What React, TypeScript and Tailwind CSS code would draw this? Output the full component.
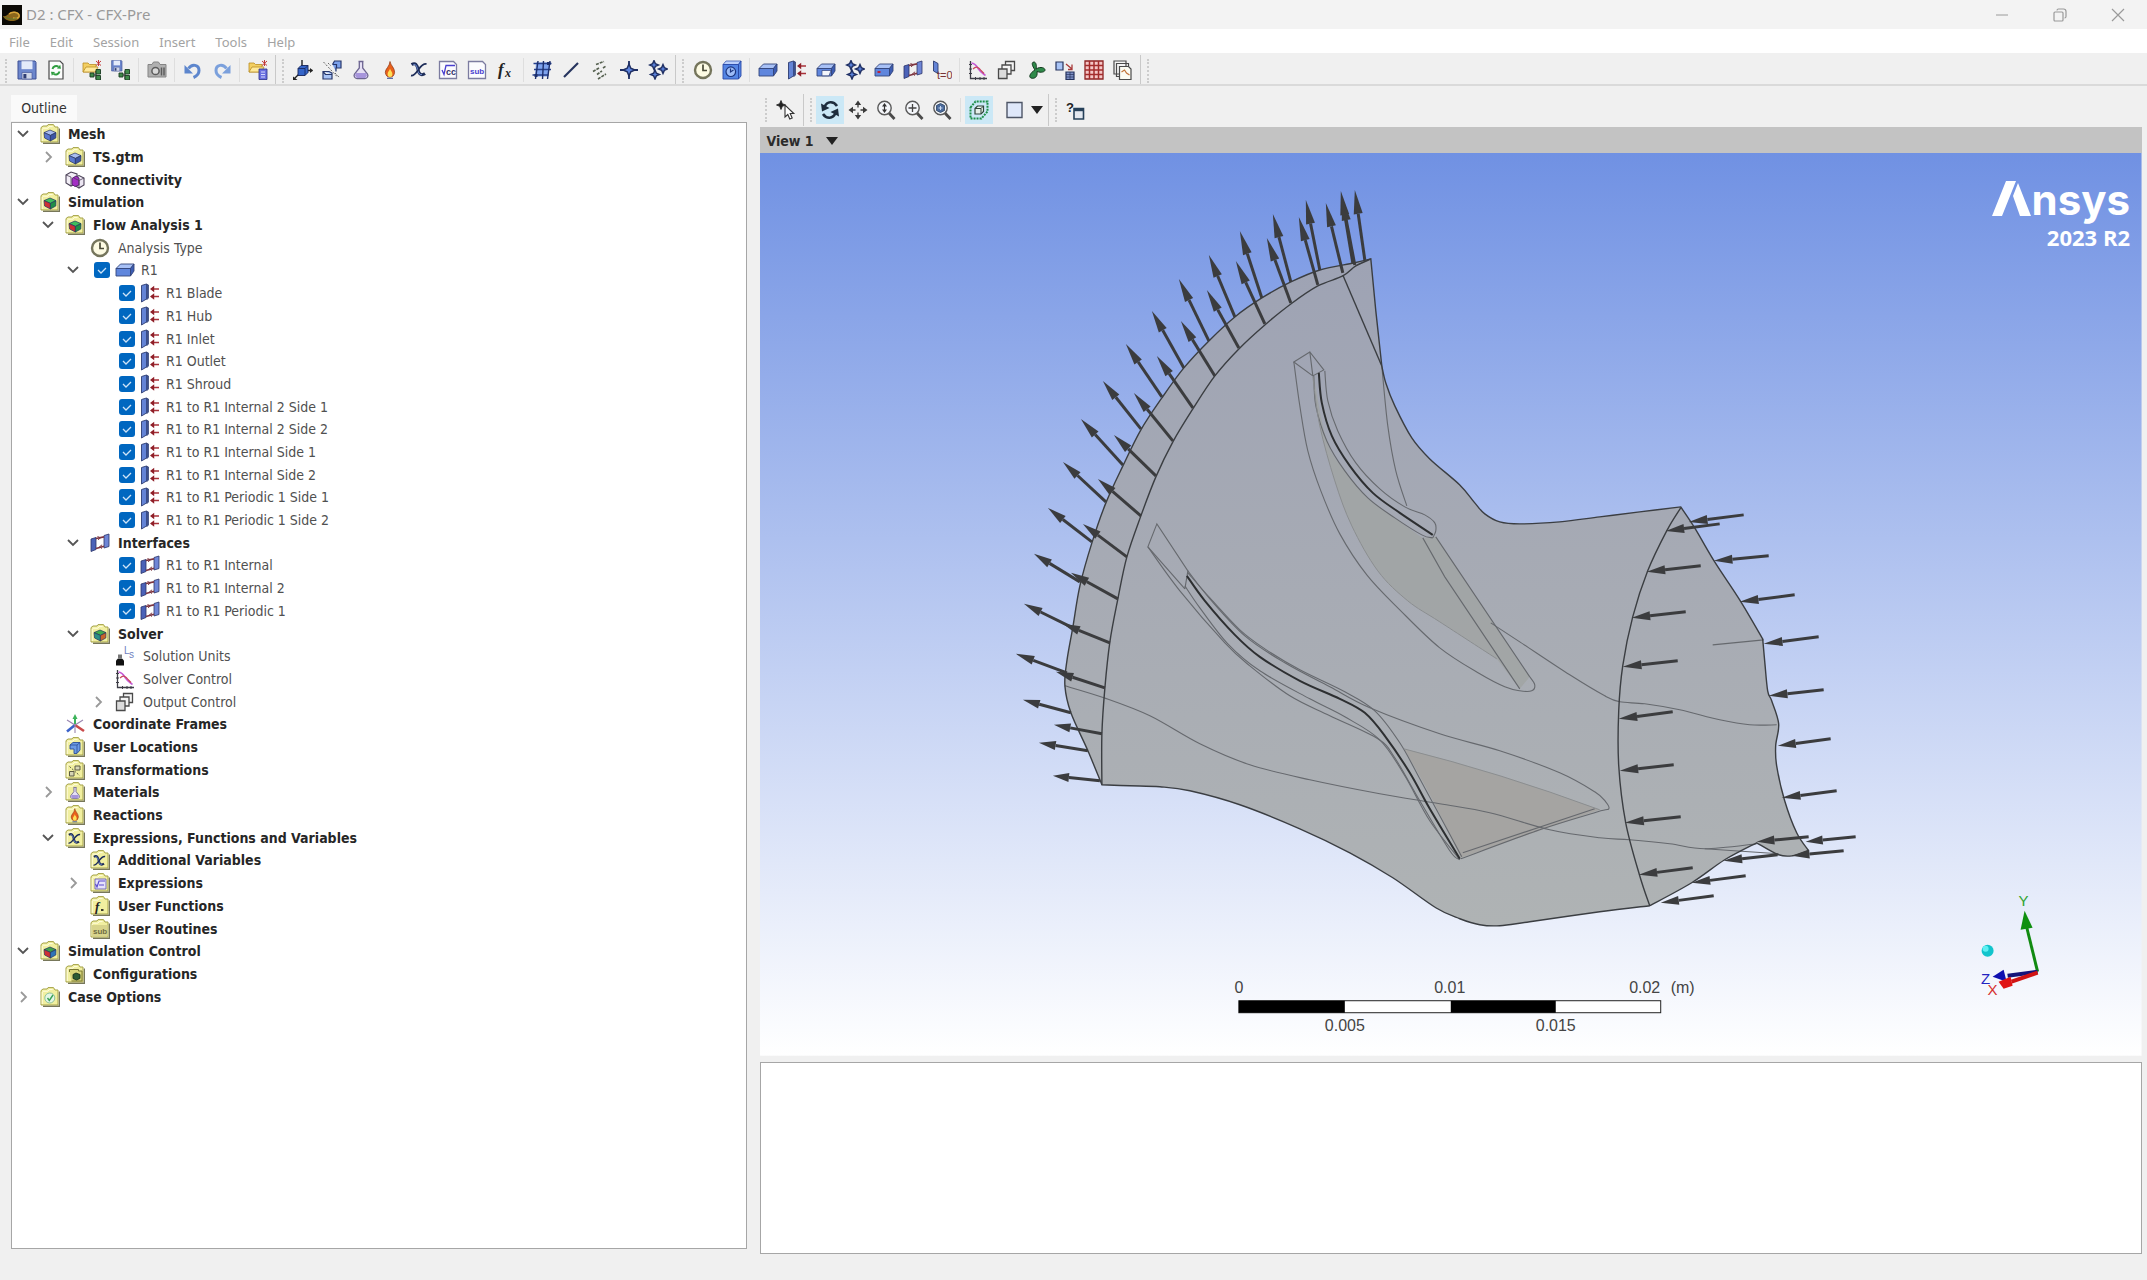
import { Fragment, type ReactNode } from "react"
import { clsx } from "clsx"

const MENUS = ["File", "Edit", "Session", "Insert", "Tools", "Help"]

/* ---------- icon parts, all on a 20x20 grid ---------- */

const Folder = ({ children }: { children?: ReactNode }) => (
  <>
    <path d="M3 19.2h16.4V4.5" fill="none" stroke="#77775a" strokeWidth="1.4" />
    <path d="M1 3.6 3 2h4l1-1.4h5.5L15 3h3v15H1z" fill="#f1efa0" stroke="#a5a248" strokeWidth="1" />
    <path d="M2.2 5v12M2.5 4.2h5.5l1-1.6h3.6" fill="none" stroke="#fffde0" strokeWidth="1" />
    {children}
  </>
)

const Cube = ({ top = "#a9bdf0", left = "#5a78cf", right = "#3d55a5" }) => (
  <>
    <path d="M4 8.6 10 6l6 2.6-5.6 2.8z" fill={top} stroke="#26335f" strokeWidth=".7" />
    <path d="m4 8.6 6.4 2.8V17L4.6 14z" fill={left} stroke="#26335f" strokeWidth=".7" />
    <path d="m16 8.6-5.6 2.8V17l5.4-3z" fill={right} stroke="#26335f" strokeWidth=".7" />
  </>
)

const Floppy = () => (
  <>
    <path d="M1 1h17l1 1.4V19H1z" fill="#6c86cc" stroke="#3c4f94" />
    <path d="M4.5 1.2h11v8h-11z" fill="#e4ebfa" />
    <path d="M5 12.5h10V19H5z" fill="#cfd6e8" stroke="#3c4f94" strokeWidth=".6" />
    <path d="M6.4 14h3v4.4h-3z" fill="#2f3d74" />
  </>
)

const Flame = () => (
  <>
    <path d="M10 1.5c.6 4 4.6 6 4.6 10.8a4.7 5.7 0 0 1-9.3 0C5.4 8.7 9.6 6.5 10 1.5z" fill="#e8601c" stroke="#8a3210" strokeWidth=".7" />
    <path d="M10 8.5c.5 2.2 2.4 3.2 2.4 5.5a2.4 3 0 0 1-4.8 0c0-2.2 2-3 2.4-5.5z" fill="#ffdf55" />
    <path d="M7 18.3h6" stroke="#4b5f9a" strokeWidth="1.2" />
  </>
)

const Flask = () => (
  <>
    <path d="M7.5 1.5h5M8.3 2v6L3.5 14a3 3 0 0 0 2.5 4.5h8a3 3 0 0 0 2.5-4.5L11.7 8V2" fill="#e6e0f4" stroke="#6d6591" strokeWidth="1.3" />
    <path d="M5 13h10l1 2.5-2 2.5H6l-2-2.5z" fill="#a795dc" />
  </>
)

const Box = ({ open = false, dot = false }) => (
  <>
    <path d="M1 8.5 5.5 4H19l-3.5 4.5z" fill="#a8c1f6" stroke="#33457c" strokeWidth=".9" />
    <path d="M1 8.5h14.5V16H1z" fill="#5f86dd" stroke="#33457c" strokeWidth=".9" />
    <path d="M15.5 8.5 19 4v7l-3.5 5z" fill="#3c5cb2" stroke="#33457c" strokeWidth=".9" />
    {open && <path d="M6 10.5h9l-2 5.3H6z" fill="#f4f6fb" stroke="#33457c" strokeWidth=".7" />}
    {dot && <path d="M3.5 12h3" stroke="#b8253c" strokeWidth="2" />}
  </>
)

const Boundary = () => (
  <>
    <path d="M1.5 2.5 6.5 1v15l-5 3z" fill="#6484d6" stroke="#2d3c70" strokeWidth=".9" />
    <path d="M6.5 1 8.5 2v13l-2 2" fill="#3b508f" stroke="#2d3c70" strokeWidth=".7" />
    <path d="M12.5 6H19M12.5 13.5H19" stroke="#a8323a" strokeWidth="1.3" />
    <path d="m10 6 4.2-3.2v6.4zM10 13.5l4.2-3.2v6.4z" fill="#8f1f28" />
  </>
)

const Interface = () => (
  <>
    <path d="M1 6 6 4.5v12L1 18.5z" fill="#4b62b8" stroke="#2b3468" strokeWidth=".8" />
    <path d="m14 2.5 5-1.5v12.5L14 15z" fill="#6f86d6" stroke="#2b3468" strokeWidth=".8" />
    <path d="M6 5.5 14 3.8M6 15.5l8-2.3" stroke="#7d3540" strokeWidth="1.7" />
    <path d="m7.5 3.5 3 1.3-2.5 2M12 15.5l-2.5-1.7 2.6-2" fill="none" stroke="#7d3540" strokeWidth="1" />
  </>
)

const Clock = () => (
  <>
    <circle cx="10" cy="10" r="8" fill="#fdfbe3" stroke="#75755c" strokeWidth="2.4" />
    <path d="M10 4.5V10.500h4" fill="none" stroke="#4a4a38" strokeWidth="1.7" />
  </>
)

const VarX = () => (
  <>
    <path d="M2.500 4.500c4-2.200 5.500 0 6.500 5s3.500 6.500 7 4" fill="none" stroke="#1d2c58" strokeWidth="3" />
    <path d="M4.500 4.500c2.500-.5 3.200 1.500 4.200 5.500s2.300 4.800 4.300 4.500" fill="none" stroke="#7f9fe6" strokeWidth="1" />
    <path d="M17.500 4c-3.500-.5-5.500 2-8 5.500S5 16 2 15.500" fill="none" stroke="#1d2c58" strokeWidth="1.800" />
  </>
)

const Sheets = () => (
  <>
    <path d="M8.500 1.500h9v9h-9z" fill="#f4f4f4" stroke="#4a4a4a" strokeWidth="1.3" />
    <path d="M5 5h9v9H5z" fill="#f4f4f4" stroke="#4a4a4a" strokeWidth="1.3" />
    <path d="M1.500 9h8.500v9.500H1.500z" fill="#dcdcdc" stroke="#4a4a4a" strokeWidth="1.3" />
  </>
)

const Plot = () => (
  <>
    <path d="M2.500 1v17.500H19" fill="none" stroke="#3d3d46" strokeWidth="1.3" />
    <path d="M1 4.500h3M1 9h3M1 13.500h3M7.500 17v3M12 17v3M16 17v3" stroke="#3d3d46" strokeWidth="1" />
    <path d="M3.500 3c4 .5 5 3 7 6s4 4 7 6.500" fill="none" stroke="#c55ad6" strokeWidth="1.6" />
    <path d="M5 9c3-3 6-2 8 1.500l3 3" fill="none" stroke="#c9485e" strokeWidth="1.2" />
  </>
)

const sparkle = (x: number, y: number, r: number) =>
  `M${x} ${y - r}l${r * 0.3} ${r * 0.7} ${r * 0.7} ${r * 0.3}-${r * 0.7} ${r * 0.3}-${r * 0.3} ${r * 0.7}-${r * 0.3}-${r * 0.7}-${r * 0.7}-${r * 0.3} ${r * 0.7}-${r * 0.3}z`

const Sparkles = () => (
  <path
    d={sparkle(6, 5, 4.5) + sparkle(15, 9, 4.5) + sparkle(7, 14.5, 4.5)}
    fill="#5b83dd"
    stroke="#1f2f63"
    strokeWidth="1.4"
  />
)

const NewFolder = () => (
  <>
    <path d="M1 3h5l1.500 1.500H14V12H1z" fill="#f3cf62" stroke="#b98d25" strokeWidth=".8" />
    <path d="M1 12 4 7h12l-2.500 5z" fill="#ffe99a" stroke="#b98d25" strokeWidth=".8" />
    <path d="m14 1 5 4.500m0-4.500-5 4.500M16.500 0v6" stroke="#c23a3a" strokeWidth="1" />
  </>
)

const Tee = () => (
  <>
    <path d="M9 15h5M14 11v8" stroke="#222" strokeWidth="1" />
    <path d="M8 13h4v4H8zM14 9.500h4.500V14H14zM14 15.500h4.500V20H14z" fill="#3f8a4a" stroke="#1a3a20" strokeWidth=".9" />
  </>
)

const Magnifier = ({ children }: { children?: ReactNode }) => (
  <>
    <path d="m12.500 12.500 6 6.500" stroke="#4a4a4a" strokeWidth="2.8" />
    <circle cx="8.500" cy="8" r="6.700" fill="#f4f6fa" stroke="#5a5a5a" strokeWidth="1.4" />
    {children}
  </>
)

const Page = ({ children }: { children?: ReactNode }) => (
  <>
    <path d="M1.500 1.500h14l3 3v14h-17z" fill="#fbfbfe" stroke="#7c7ca0" strokeWidth="1.3" />
    {children}
  </>
)

const ICONS = {
  save: <Floppy />,
  reload: (
    <>
      <path d="M3 1h11l3 3v15H3z" fill="#fdfdfd" stroke="#4a4a4a" strokeWidth="1.2" />
      <path d="M6.500 9a3.800 3.800 0 0 1 6-2.200M13.500 11.500a3.800 3.800 0 0 1-6 2.200" fill="none" stroke="#2f9d3f" strokeWidth="1.9" />
      <path d="m11 8.500 4 .2-.8-4zM9 12l-4-.2.800 4z" fill="#2f9d3f" />
    </>
  ),
  openTee: <><NewFolder /><Tee /></>,
  saveTee: <><g transform="scale(.58)"><Floppy /></g><Tee /></>,
  camera: (
    <>
      <path d="M1 4.500h4L6.500 2h5L13 4.500h6V17H1z" fill="#b0b0b0" stroke="#858585" />
      <circle cx="8.500" cy="11" r="3.600" fill="#d9d9d9" stroke="#5c5c5c" strokeWidth="1.5" />
      <path d="M14.500 7.500v8M17 7.500v8" stroke="#5c5c5c" strokeWidth="1.5" />
    </>
  ),
  undo: (
    <>
      <path d="M5.500 8.500C9 3.500 16 4.500 16 10.500c0 3-2 5.500-5.500 7" fill="none" stroke="#5d86cd" strokeWidth="3" />
      <path d="M1.500 5v8.500H10z" fill="#5d86cd" />
    </>
  ),
  redo: (
    <>
      <path d="M14.500 8.500C11 3.500 4 4.500 4 10.500c0 3 2 5.500 5.500 7" fill="none" stroke="#7ba0dc" strokeWidth="3" />
      <path d="M18.500 5v8.500H10z" fill="#7ba0dc" />
    </>
  ),
  openDoc: (
    <>
      <NewFolder />
      <path d="M11 9h8v10.500h-8z" fill="#6b70e0" stroke="#2a2f86" strokeWidth=".8" />
      <path d="M13 12h4M13 14.500h4M13 17h4" stroke="#dfe2ff" strokeWidth=".9" />
    </>
  ),
  domainCube: (
    <>
      <path d="M9 9V0M10 10.500h9.500M8 12l-7 7" stroke="#222" strokeWidth="1.4" />
      <path d="M5 8.500 8 5.500h7v7L12 15.500H5z" fill="#3565c9" stroke="#15255a" strokeWidth=".9" />
      <path d="M5 8.500h7l3-3M12 8.500v7" fill="none" stroke="#15255a" strokeWidth=".8" />
      <path d="M0 16.500 4.500 20H0zM17 8l3 2.500-3 2.500z" fill="#222" />
    </>
  ),
  transform: (
    <>
      <path d="M10.500 4.500 12.500 1H19v7h-5v3.500M10.500 4.500h4v4" fill="#7da2ec" stroke="#27376c" strokeWidth="1.2" />
      <path d="M1 11.500h6l3 1.500v6H1zM1 11.500l2.500 3H10" fill="#a9c4f6" stroke="#27376c" strokeWidth="1.2" />
      <path d="m1.500 2 14 15M6 3l3 3M13 13l5 5" stroke="#666" strokeWidth="1" strokeDasharray="2 1.500" />
    </>
  ),
  flask: <Flask />,
  flame: <Flame />,
  varX: <VarX />,
  expr: (
    <Page>
      <path d="m4 10 2 4.500L8 5.500h9" fill="none" stroke="#4a3fd0" strokeWidth="1.3" />
      <text x="8" y="15" fontSize="9" fontFamily="Liberation Sans" fontWeight="700" fill="#33336a">cc</text>
    </Page>
  ),
  sub: (
    <Page>
      <text x="3" y="14" fontSize="8" fontFamily="Liberation Sans" fontWeight="700" fill="#4a3fd0">sub</text>
    </Page>
  ),
  fx: (
    <>
      <text x="2" y="15" fontSize="17" fontFamily="Liberation Serif" fontStyle="italic" fontWeight="700" fill="#222">f</text>
      <text x="9" y="17" fontSize="12" fontFamily="Liberation Serif" fontStyle="italic" fontWeight="700" fill="#222">x</text>
    </>
  ),
  meshGrid: (
    <>
      <path d="M4 2.500h14.500L16 16.500H3z" fill="#7ea3ee" />
      <path d="M1.500 3.500h18M2 9.500h17M.5 15h16" stroke="#27408c" strokeWidth="1.4" />
      <path d="M6 1 3.500 19M11.500 1l-1 18M18 1l-2.500 18" stroke="#1d2f6b" strokeWidth="1.4" />
      <path d="M2.500 14h3v3h-3zM15 2h3.500v3H15z" fill="#1d2f6b" />
    </>
  ),
  line: <path d="M3 17 17 3" stroke="#26345e" strokeWidth="2.2" />,
  lines: <path d="m6 4.500 8-3M3 11.500l6-3.500M8 19l8-5M7 14.500l5-3.500M13 8l3-2" stroke="#55604f" strokeWidth="1.6" strokeDasharray="3 1" />,
  point: (
    <>
      <path d="M10 1v18M1 10h18" stroke="#1f2f63" strokeWidth="1.8" />
      <path d={sparkle(10, 10, 6)} fill="#5b83dd" stroke="#1f2f63" strokeWidth="1.5" />
    </>
  ),
  points: <Sparkles />,
  clock: <Clock />,
  clockBox: (
    <>
      <path d="M1 4.500 4 1h15l-2.500 3.500z" fill="#bcd0fa" stroke="#2a4aa8" strokeWidth=".7" />
      <path d="M1 4.500h15.500V19H1zM16.500 4.500 19 1v15l-2.500 3z" fill="#5485e4" stroke="#2a4aa8" strokeWidth=".9" />
      <circle cx="8.800" cy="11.700" r="4.800" fill="#9dbcf7" stroke="#1c357f" strokeWidth="1.2" />
      <path d="M8.500 8.500v3.500l3-2" fill="none" stroke="#1c357f" strokeWidth="1.2" />
    </>
  ),
  box: <Box />,
  boundary: <Boundary />,
  boxOpen: <Box open />,
  boxDot: <Box dot />,
  interfaces: <Interface />,
  initial: (
    <>
      <path d="M1.500 1 6 3.500v10L1.500 11z" fill="#6484d6" stroke="#2d3c70" strokeWidth=".9" />
      <text x="5" y="19" fontSize="11" fontFamily="Liberation Sans" fill="#7a3434">t=0</text>
    </>
  ),
  plot: <Plot />,
  sheets: <Sheets />,
  fan: <path d="M9 10C5 4 6 2 8 2s3 4 2 7c5-3 9-1 9 1s-4 3-8 1.500c1 6-3 7.500-6 6.500s0-6 4-8" fill="#2f8a4a" stroke="#143a20" strokeWidth="1" />,
  copyMesh: (
    <>
      <path d="M1 2h7v8H1z" fill="#a9c4f6" stroke="#26345e" strokeWidth="1.2" />
      <path d="M11 12h8v7.500h-8z" fill="#7d8fc4" stroke="#26345e" strokeWidth="1.2" />
      <path d="M11 14.500h8M11 17h8M15 12v7.500" stroke="#26345e" strokeWidth=".7" />
      <path d="m11 4 6 5m0-4.500V9.500h-4" fill="none" stroke="#a83a3a" strokeWidth="1.3" />
    </>
  ),
  table: (
    <>
      <path d="M1 1h18v18H1z" fill="#f5c6c6" stroke="#8d2323" strokeWidth="1.3" />
      <path d="M1 5.500h18M1 10h18M1 14.500h18M5.500 1v18M10 1v18M14.500 1v18" stroke="#a32b2b" strokeWidth="1.5" />
    </>
  ),
  reports: (
    <>
      <path d="M1 1h12v13H1zM3.500 3.500h12v13h-12z" fill="#f4f4f4" stroke="#4a4a4a" strokeWidth="1.2" />
      <path d="M6.500 6.500h9l2.500 2.500v10.500H6.500z" fill="#fbfbf2" stroke="#4a4a4a" strokeWidth="1.2" />
      <path d="m8.500 12 3-2 2 3 3 2" fill="none" stroke="#c2743a" strokeWidth="1.2" />
    </>
  ),
  pick: (
    <>
      <path d={sparkle(5, 5, 4.5)} fill="#222" stroke="#222" strokeWidth=".8" />
      <path d="M9 5v12l2.800-2.500 2 4.500 2.400-1-2-4.500h3.600z" fill="#fff" stroke="#333" strokeWidth="1.1" />
    </>
  ),
  rotate: (
    <>
      <path d="M17 6C13.500.8 7 1 4.500 7M3 14c3.500 5.200 10 5 12.500-1" fill="none" stroke="#1e2d3d" strokeWidth="2.6" />
      <path d="M1 3.500 9.500 8 2 11.500zM19 16.500 10.500 12l7.500-3.500z" fill="#1e2d3d" />
    </>
  ),
  pan: (
    <>
      <path d="m10 .5 3.200 4.500H6.800zM10 19.500l3.200-4.500H6.800zM.5 10 5 6.800v6.400zM19.500 10 15 6.800v6.400z" fill="#3a3a3a" />
      <path d="M10 4v3.500M10 12.500V16M4 10h3.500M12.500 10H16" stroke="#3a3a3a" strokeWidth="1.3" />
    </>
  ),
  zoomFree: (
    <Magnifier>
      <path d="m8.500 3 2.500 3.500H6zM8.500 13 6 9.500h5z" fill="#333" />
      <path d="M8.500 5v6" stroke="#333" strokeWidth="1.2" />
    </Magnifier>
  ),
  zoomBox: (
    <Magnifier>
      <path d="M8.500 4v8M4.500 8h8" stroke="#444" strokeWidth="1.3" />
    </Magnifier>
  ),
  zoomFit: (
    <Magnifier>
      <path d="m8.500 3.500 4 2v5l-4 2-4-2v-5z" fill="#4a6a9c" stroke="#27405f" strokeWidth=".8" />
      <path d="M8.500 6v4M6.500 8h4" stroke="#c8d8f0" strokeWidth="1" />
    </Magnifier>
  ),
  highlight: (
    <>
      <path d="M1.500 7.500 6.500 1.500h12v10l-6 7h-11z" fill="none" stroke="#1f8f4a" strokeWidth="2" strokeDasharray="2 1" />
      <path d="M6 8.500 8.500 6h6v5.500L12 14H6z" fill="#e6efe9" stroke="#31453a" strokeWidth="1.2" />
      <path d="M6 8.500h6l2.500-2.500M12 8.500V14" fill="none" stroke="#31453a" strokeWidth="1" />
    </>
  ),
  square: <path d="M2 2.500h15v15H2z" fill="#dfe8fa" stroke="#4d5566" strokeWidth="1.4" />,
  helpBox: (
    <>
      <text x="1" y="12" fontSize="13" fontFamily="Liberation Sans" fontWeight="700" fill="#222">?</text>
      <path d="M9 8.500h9.500V19H9z" fill="#e3e8f0" stroke="#26415a" strokeWidth="1.6" />
      <path d="M9 10h9.500" stroke="#26415a" strokeWidth="2.4" />
    </>
  ),
  folderMesh: <Folder><Cube /></Folder>,
  connectivity: (
    <>
      <path d="M1 5 6 2l6 2v9l-6 3-5-3z" fill="#f2eef6" stroke="#4c4358" strokeWidth="1.1" />
      <path d="m9 8 5-2.500 5 2.500v7l-5 3-5-3z" fill="#ece6f2" stroke="#4c4358" strokeWidth="1.1" />
      <path d="m7 8.500 4-2.500 3 2v7l-4 1.500-3-2z" fill="#a32fc4" stroke="#52206b" strokeWidth=".9" />
      <path d="M1 5l5 2v9M9 8l5 2.500V18M14 10.500 19 8" fill="none" stroke="#4c4358" strokeWidth=".8" />
    </>
  ),
  folderSim: <Folder><Cube top="#3fbf5c" left="#cf2f35" right="#1f8f46" /></Folder>,
  folderSolver: <Folder><Cube top="#3fae4c" left="#2a8f86" right="#c8642a" /></Folder>,
  folderControl: <Folder><Cube top="#3f9f4c" left="#cf2f35" right="#2f74b8" /></Folder>,
  units: (
    <>
      <path d="M1 19.500v-5l2-2h4l2 2v5z" fill="#111" />
      <path d="M3 12V8.500h4V12" fill="#777" />
      <text x="9" y="8" fontSize="10" fontFamily="Liberation Sans" fill="#6f7fc0">L</text>
      <text x="14" y="12" fontSize="10" fontFamily="Liberation Sans" fill="#6f7fc0">s</text>
    </>
  ),
  axes: (
    <>
      <path d="M10 11V4" stroke="#3cb35a" strokeWidth="2" />
      <path d="m10 0 2.500 5h-5z" fill="#3cb35a" />
      <path d="M10 11 2 17.500" stroke="#3b62c9" strokeWidth="2.6" />
      <path d="m10 11 9 6" stroke="#c94a4a" strokeWidth="2.6" />
      <path d="m2 6 8 5 8-5M10 11v8" fill="none" stroke="#9a86b0" strokeWidth="1.1" />
    </>
  ),
  folderLoc: (
    <Folder>
      <path d="M5 8 8 5.500h7V13l-3 3.500H9V12H5z" fill="#6b9ae6" stroke="#2c4f96" strokeWidth=".9" />
      <path d="M5 8h7l3-2.500M12 8v8" fill="none" stroke="#2c4f96" strokeWidth=".8" />
    </Folder>
  ),
  folderTrans: (
    <Folder>
      <path d="M10 6h5v4h-5zM4.500 11.500H9v4.500H4.500z" fill="#d6d4b4" stroke="#5d5b44" strokeWidth="1" />
      <path d="m4.500 6.500 10 9" stroke="#5d5b44" strokeWidth="1" strokeDasharray="2 1.300" />
    </Folder>
  ),
  folderFlask: <Folder><g transform="translate(3.5 4.5) scale(.65)"><Flask /></g></Folder>,
  folderFlame: <Folder><g transform="translate(2 2.5) scale(.78)"><Flame /></g></Folder>,
  folderX: <Folder><g transform="translate(2 3.5) scale(.75)"><VarX /></g></Folder>,
  folderExpr: (
    <Folder>
      <path d="M5 6h11v10H5z" fill="#e6e2fa" stroke="#6a60b8" strokeWidth=".9" />
      <path d="m5.500 11 1.500 3 2-6h6M9 12h5" fill="none" stroke="#5a4bd0" strokeWidth="1.2" />
    </Folder>
  ),
  folderFx: (
    <Folder>
      <text x="5" y="15" fontSize="13" fontFamily="Liberation Serif" fontStyle="italic" fontWeight="700" fill="#222">f</text>
      <path d="M11 14h2.500" stroke="#222" strokeWidth="1.8" />
    </Folder>
  ),
  folderSub: (
    <Folder>
      <path d="M2 6h15.500v11.500H2z" fill="#d8d48c" />
      <text x="3" y="14.500" fontSize="8" fontFamily="Liberation Sans" fontWeight="700" fill="#6f6c42">sub</text>
    </Folder>
  ),
  folderConf: (
    <Folder>
      <path d="M4.500 8V5.500h9V7H17v10H6.500" fill="#d9d77a" stroke="#7a7832" strokeWidth="1" />
      <path d="M8 10.500 11 9l4 1.500v4L11.500 16 8 14.500z" fill="#2c5c34" stroke="#112a16" strokeWidth=".8" />
    </Folder>
  ),
  folderCase: (
    <Folder>
      <circle cx="9.800" cy="11" r="5" fill="#e4f6e6" stroke="#8dc29a" strokeWidth="1" />
      <path d="m7.500 11 1.800 2.500L13 8" fill="none" stroke="#3aa257" strokeWidth="1.4" />
    </Folder>
  ),
}

type IconName = keyof typeof ICONS

function Icon({ name, className }: { name: IconName; className: string }) {
  return (
    <svg viewBox="0 0 20 20" className={clsx("shrink-0", className)} aria-hidden="true">
      {ICONS[name]}
    </svg>
  )
}

/* ---------- toolbars ---------- */

type Tool = [IconName, string] | "sep"

const MAIN_TOOLS: Tool[][] = [
  [
    ["save", "Save case"], ["reload", "Reload"], "sep",
    ["openTee", "Open mesh"], ["saveTee", "Save as"], "sep",
    ["camera", "Save picture"], "sep",
    ["undo", "Undo"], ["redo", "Redo"], "sep",
    ["openDoc", "Report"],
  ],
  [
    ["domainCube", "Coordinate frame"], ["transform", "Transformation"], ["flask", "Material"],
    ["flame", "Reaction"], ["varX", "Additional variable"], ["expr", "Expression"],
    ["sub", "User routine"], ["fx", "User function"], "sep",
    ["meshGrid", "User surface"], ["line", "Line"], ["lines", "Lines"], ["point", "Point"], ["points", "Points"],
  ],
  [
    ["clock", "Analysis type"], ["clockBox", "Flow analysis"], "sep",
    ["box", "Domain"], ["boundary", "Boundary"], ["boxOpen", "Subdomain"], ["points", "Source point"],
    ["boxDot", "Rigid body"], ["interfaces", "Domain interface"], ["initial", "Initialization"], "sep",
    ["plot", "Solver control"], ["sheets", "Output control"], ["fan", "Turbo mode"],
    ["copyMesh", "Mesh adaption"], ["table", "Operating points"], ["reports", "Configurations"],
  ],
]

function Dots() {
  return <span className="my-1 h-6 border-l-2 border-dotted border-[#cccccc]" />
}

function Handle() {
  return (
    <span className="flex w-4 items-stretch justify-between self-stretch pr-1 pl-[3px]">
      <span className="w-px bg-[#c9c9c9]" />
      <Dots />
    </span>
  )
}

function Tools({ tools }: { tools: Tool[] }) {
  return (
    <>
      {tools.map((tool, i) =>
        tool === "sep" ? (
          <span key={i} className="mx-[3px] h-6 w-px bg-[#dedede]" />
        ) : (
          <button key={i} type="button" aria-label={tool[1]} className="flex h-7 w-[29px] items-center justify-center">
            <Icon name={tool[0]} className="size-5" />
          </button>
        ),
      )}
    </>
  )
}

function ViewTool({ icon, label, active }: { icon: IconName; label: string; active?: boolean }) {
  return (
    <button
      type="button"
      aria-label={label}
      className={clsx("flex h-7 w-7 items-center justify-center", active && "bg-[#cbe8f6]")}
    >
      <Icon name={icon} className="size-5" />
    </button>
  )
}

/* ---------- outline tree ---------- */

type Node = {
  text: string
  level: number
  icon: IconName
  bold?: boolean
  check?: boolean
  arrow?: "open" | "closed"
}

const boundary = (text: string): Node => ({ text, level: 3, icon: "boundary", check: true })
const iface = (text: string): Node => ({ text, level: 3, icon: "interfaces", check: true })

const TREE: Node[] = [
  { text: "Mesh", level: 0, icon: "folderMesh", bold: true, arrow: "open" },
  { text: "TS.gtm", level: 1, icon: "folderMesh", bold: true, arrow: "closed" },
  { text: "Connectivity", level: 1, icon: "connectivity", bold: true },
  { text: "Simulation", level: 0, icon: "folderSim", bold: true, arrow: "open" },
  { text: "Flow Analysis 1", level: 1, icon: "folderSim", bold: true, arrow: "open" },
  { text: "Analysis Type", level: 2, icon: "clock" },
  { text: "R1", level: 2, icon: "box", check: true, arrow: "open" },
  boundary("R1 Blade"),
  boundary("R1 Hub"),
  boundary("R1 Inlet"),
  boundary("R1 Outlet"),
  boundary("R1 Shroud"),
  boundary("R1 to R1 Internal 2 Side 1"),
  boundary("R1 to R1 Internal 2 Side 2"),
  boundary("R1 to R1 Internal Side 1"),
  boundary("R1 to R1 Internal Side 2"),
  boundary("R1 to R1 Periodic 1 Side 1"),
  boundary("R1 to R1 Periodic 1 Side 2"),
  { text: "Interfaces", level: 2, icon: "interfaces", bold: true, arrow: "open" },
  iface("R1 to R1 Internal"),
  iface("R1 to R1 Internal 2"),
  iface("R1 to R1 Periodic 1"),
  { text: "Solver", level: 2, icon: "folderSolver", bold: true, arrow: "open" },
  { text: "Solution Units", level: 3, icon: "units" },
  { text: "Solver Control", level: 3, icon: "plot" },
  { text: "Output Control", level: 3, icon: "sheets", arrow: "closed" },
  { text: "Coordinate Frames", level: 1, icon: "axes", bold: true },
  { text: "User Locations", level: 1, icon: "folderLoc", bold: true },
  { text: "Transformations", level: 1, icon: "folderTrans", bold: true },
  { text: "Materials", level: 1, icon: "folderFlask", bold: true, arrow: "closed" },
  { text: "Reactions", level: 1, icon: "folderFlame", bold: true },
  { text: "Expressions, Functions and Variables", level: 1, icon: "folderX", bold: true, arrow: "open" },
  { text: "Additional Variables", level: 2, icon: "folderX", bold: true },
  { text: "Expressions", level: 2, icon: "folderExpr", bold: true, arrow: "closed" },
  { text: "User Functions", level: 2, icon: "folderFx", bold: true },
  { text: "User Routines", level: 2, icon: "folderSub", bold: true },
  { text: "Simulation Control", level: 0, icon: "folderControl", bold: true, arrow: "open" },
  { text: "Configurations", level: 1, icon: "folderConf", bold: true },
  { text: "Case Options", level: 0, icon: "folderCase", bold: true, arrow: "closed" },
]

const INDENT = ["pl-0", "pl-[25px]", "pl-[50px]", "pl-[75px]"]

function TreeRow({ node }: { node: Node }) {
  const Label = node.check ? "label" : "div"
  return (
    <li className={clsx("flex items-center", INDENT[node.level])}>
      <span className="flex w-[22px] justify-center">
        {node.arrow && (
          <button type="button" aria-label={node.arrow === "open" ? "Collapse" : "Expand"}>
            <svg viewBox="0 0 12 12" className="size-3" fill="none" strokeWidth="1.8">
              {node.arrow === "open" ? (
                <path d="m1 3 5 5 5-5" stroke="#555" />
              ) : (
                <path d="m4 1 5 5-5 5" stroke="#999" />
              )}
            </svg>
          </button>
        )}
      </span>
      <Label className="flex items-center">
        {node.check && (
          <span className="relative ml-[10px] size-4">
            <input type="checkbox" defaultChecked className="block size-4 appearance-none rounded-[3px] bg-[#0067c0]" />
            <svg viewBox="0 0 16 16" className="pointer-events-none absolute inset-0">
              <path d="m4 8 3 3 5-5" fill="none" stroke="#cfe4f7" strokeWidth="1.3" />
            </svg>
          </span>
        )}
        <Icon name={node.icon} className={clsx("size-5", node.check ? "mr-[6px] ml-[5px]" : "mr-2 ml-[6px]")} />
        <span className={clsx("whitespace-nowrap", node.bold ? "font-bold text-[#262626]" : "text-[#505050]")}>
          {node.text}
        </span>
      </Label>
    </li>
  )
}

/* ---------- 3D view ---------- */

// [tail x, tail y, tip x, tip y]
const OUTLET_ARROWS = [
  [1365, 259, 1355, 189], [1353, 262, 1341, 190], [1355, 264, 1342, 196], [1343, 272, 1326, 202],
  [1320, 269, 1306, 199], [1318, 284, 1299, 216], [1291, 281, 1273, 213], [1291, 302, 1267, 237],
  [1262, 297, 1240, 230], [1265, 323, 1236, 260], [1235, 316, 1209, 254], [1239, 347, 1207, 289],
  [1209, 340, 1179, 278], [1215, 375, 1181, 320], [1184, 367, 1152, 310], [1193, 407, 1157, 355],
  [1162, 396, 1126, 343], [1173, 440, 1134, 392], [1141, 428, 1103, 380], [1156, 475, 1114, 434],
  [1123, 464, 1081, 418], [1141, 515, 1098, 478], [1106, 501, 1063, 461], [1127, 556, 1083, 523],
  [1092, 541, 1048, 507], [1118, 598, 1071, 572], [1080, 581, 1034, 553], [1110, 642, 1063, 623],
  [1073, 627, 1024, 603], [1105, 687, 1056, 671], [1067, 672, 1016, 653], [1071, 712, 1023, 699],
  [1102, 733, 1054, 724], [1088, 750, 1039, 742], [1100, 780, 1053, 775],
]

const INLET_ARROWS = [
  [1744, 514, 1689, 521], [1720, 523, 1666, 530], [1769, 555, 1714, 560], [1701, 565, 1647, 571],
  [1795, 594, 1740, 601], [1686, 611, 1632, 617], [1819, 636, 1764, 643], [1678, 660, 1623, 666],
  [1824, 689, 1769, 695], [1673, 711, 1619, 718], [1831, 738, 1778, 745], [1674, 764, 1620, 770],
  [1837, 790, 1782, 797], [1681, 816, 1625, 822], [1809, 836, 1757, 841], [1856, 836, 1806, 841],
  [1844, 850, 1792, 855], [1778, 854, 1724, 860], [1693, 867, 1639, 874], [1746, 875, 1692, 882],
  [1714, 895, 1661, 902],
]

function Arrow({ pts }: { pts: number[] }) {
  const [x1, y1, x2, y2] = pts
  const len = Math.hypot(x2 - x1, y2 - y1)
  const ux = (x2 - x1) / len
  const uy = (y2 - y1) / len
  const head = Math.min(24, len * 0.34)
  const bx = x2 - ux * head
  const by = y2 - uy * head
  return (
    <g>
      <path d={`M${x1} ${y1}L${bx} ${by}`} strokeWidth="3" />
      <path d={`M${x2} ${y2}L${bx - uy * 4.5} ${by + ux * 4.5}L${bx + uy * 4.5} ${by - ux * 4.5}z`} stroke="none" />
    </g>
  )
}

// Smooth line through the points (Catmull-Rom turned into cubic segments)
function curve(p: number[][], start = "M") {
  let d = `${start}${p[0][0]} ${p[0][1]}`
  for (let i = 0; i < p.length - 1; i++) {
    const a = p[i - 1] ?? p[i]
    const b = p[i]
    const c = p[i + 1]
    const e = p[i + 2] ?? c
    d += `C${b[0] + (c[0] - a[0]) / 6} ${b[1] + (c[1] - a[1]) / 6} ${c[0] - (e[0] - b[0]) / 6} ${c[1] - (e[1] - b[1]) / 6} ${c[0]} ${c[1]}`
  }
  return d
}

const outerArc = [[1371, 258], [1354, 262], [1320, 269], [1291, 281], [1262, 297], [1235, 316], [1209, 340], [1184, 367], [1162, 397], [1141, 429], [1123, 465], [1106, 502], [1092, 542], [1080, 585], [1073, 626], [1067, 660], [1065, 685], [1071, 712], [1088, 750], [1102, 784]]
const hubEdge = [[1102, 784], [1130, 785], [1160, 786], [1190, 790], [1240, 804], [1300, 828], [1350, 852], [1393, 877], [1436, 907], [1460, 918], [1480, 924], [1500, 925], [1530, 921], [1600, 911], [1650, 905]]
const inletLow = [[1650, 905], [1692, 882], [1725, 859], [1757, 842]]
const inletTail = [[1757, 842], [1779, 854], [1793, 855], [1809, 850]]
const inletRight = [[1809, 850], [1797, 832], [1785, 800], [1777, 765], [1776, 745], [1779, 723], [1772, 700], [1768, 690], [1765, 660], [1763, 638]]
const inletTop = [[1763, 638], [1740, 599], [1715, 561], [1695, 527], [1681, 506]]
const shroudEdge = [[1681, 506], [1640, 511], [1600, 516], [1560, 521], [1520, 523], [1500, 521], [1485, 513], [1475, 502], [1460, 484], [1430, 458], [1412, 437], [1395, 405], [1386, 382], [1382, 365]]

const SHELL =
  curve(outerArc) + curve(hubEdge, "L") + curve(inletLow, "L") + curve(inletTail, "L") +
  curve(inletRight, "L") + curve(inletTop, "L") + curve(shroudEdge, "L") + "L1376 310L1371 258z"

const innerArc = curve([[1371, 258], [1356, 265], [1343, 275], [1318, 285], [1291, 303], [1265, 324], [1239, 348], [1215, 375], [1193, 408], [1173, 441], [1156, 476], [1141, 515], [1127, 556], [1118, 598], [1110, 641], [1105, 687], [1102, 733], [1102, 784]])
const inletArc = curve([[1681, 507], [1667, 530], [1648, 570], [1633, 616], [1623, 665], [1619, 710], [1619, 765], [1626, 822], [1640, 875], [1650, 905]])

const upperBladeRoot = curve([[1313, 376], [1320, 425], [1335, 480], [1352, 525], [1378, 570], [1408, 600], [1440, 621], [1497, 658]])

const FAINT = [
  curve([[1382, 365], [1388, 425], [1396, 470], [1407, 505]]),
  curve([[1491, 622], [1520, 641], [1570, 674], [1605, 695], [1620, 701], [1645, 703], [1680, 709], [1720, 719], [1750, 724], [1777, 724]]),
  "M1713 644 1764 639",
  curve([[1065, 685], [1104, 697], [1150, 715], [1200, 743], [1250, 764], [1310, 779], [1380, 793], [1440, 803], [1490, 812], [1550, 829], [1600, 837], [1630, 839], [1670, 843], [1705, 848], [1757, 843]]),
  "M1705 848 1779 853",
  // upper blade
  "M1294 361 1310 351 1324 369 1313 375zM1310 351 1313 375",
  curve([[1294, 361], [1300, 405], [1308, 450], [1321, 490], [1340, 533], [1367, 574], [1400, 609], [1440, 647], [1480, 673], [1505, 686], [1520, 690], [1532, 690], [1535, 684], [1530, 676]]),
  "M1530 676 1436 536M1423 537 1445 576 1520 688",
  curve([[1314, 375], [1316, 405], [1327, 440], [1345, 470], [1368, 497], [1395, 517], [1422, 534], [1433, 537]]),
  curve([[1325, 370], [1328, 400], [1338, 430], [1356, 462], [1380, 488], [1405, 506], [1425, 514], [1435, 522], [1436, 530], [1433, 537]]),
  // lower blade
  "M1185 588 1188 570 1157 523 1148 546 1185 588",
  curve([[1188, 570], [1210, 598], [1245, 635], [1285, 662], [1330, 686], [1370, 707], [1440, 733], [1500, 750], [1560, 772], [1595, 791], [1606, 801], [1609, 808], [1598, 811], [1540, 829], [1461, 858]]),
  curve([[1148, 546], [1180, 590], [1225, 642], [1250, 665], [1290, 695], [1330, 715], [1378, 738], [1395, 757], [1420, 800], [1450, 850], [1460, 859]]),
  curve([[1188, 572], [1210, 597], [1240, 629], [1265, 648], [1300, 669], [1345, 691], [1375, 710], [1400, 742], [1420, 778], [1440, 815], [1462, 856]]),
  curve([[1185, 585], [1200, 607], [1228, 643], [1260, 670], [1310, 698], [1345, 716], [1380, 739], [1405, 775], [1430, 820], [1460, 859]]),
  "M1463 852 1595 808",
]

function FlowModel() {
  return (
    <svg viewBox="760 152 1382 903" className="block w-full" role="img" aria-label="Blade passage">
      <defs>
        <linearGradient id="sky" x2="0" y2="1">
          <stop offset="0" stopColor="#7091e3" />
          <stop offset="1" stopColor="#ffffff" />
        </linearGradient>
        <linearGradient id="metal" x2="0" y2="1">
          <stop offset="0" stopColor="#9ea3b4" />
          <stop offset=".5" stopColor="#a7abb4" />
          <stop offset="1" stopColor="#afb3b4" />
        </linearGradient>
      </defs>
      <rect x="760" y="152" width="1382" height="903" fill="url(#sky)" />

      <path d={SHELL} fill="url(#metal)" />
      <path
        d={upperBladeRoot + "L1520 688L1530 676L1436 536" + curve([[1423, 537], [1395, 517], [1368, 497], [1345, 470], [1327, 440], [1314, 376]], "L") + "z"}
        fill="#a0a4a3"
        fillOpacity=".8"
      />
      <path d="M1404 748Q1500 772 1600 809L1461 857Q1430 790 1404 748z" fill="#a3a29f" fillOpacity=".85" />
      <g fill="none" stroke="#66696e" strokeWidth="1.1">
        {FAINT.map((d, i) => <path key={i} d={d} />)}
      </g>
      <g fill="none" stroke="#8b8e90" strokeWidth="1">
        <path d={upperBladeRoot} />
        <path d="M1404 748Q1500 772 1600 809" />
      </g>
      <g fill="none" stroke="#3b3e42" strokeWidth="1.4">
        <path d={SHELL} />
        <path d={innerArc} />
        <path d={inletArc} />
        <path d="M1343 274 1382 365" />
      </g>
      <g fill="none" stroke="#2d2f31" strokeWidth="2">
        <path d={curve([[1319, 372], [1322, 402], [1332, 435], [1350, 465], [1373, 492], [1400, 512], [1433, 534]])} />
        <path d={curve([[1187, 575], [1205, 600], [1235, 634], [1260, 656], [1300, 680], [1340, 698], [1365, 712], [1385, 735], [1410, 772], [1430, 808], [1460, 858]])} />
      </g>
      <g fill="#3b3c3e" stroke="#3b3c3e">
        {OUTLET_ARROWS.map((a, i) => <Arrow key={i} pts={a} />)}
        {INLET_ARROWS.map((a, i) => <Arrow key={i} pts={a} />)}
      </g>

      {/* Scale */}
      <rect x="1239" y="1000" width="422" height="12" fill="#fff" stroke="#222" />
      <path d="M1239 1000h106v12h-106zM1451 1000h105v12h-105z" fill="#000" />
      <g fontFamily="Liberation Sans" fontSize="16" fill="#444" textAnchor="middle">
        <text x="1239" y="992">0</text>
        <text x="1450" y="992">0.01</text>
        <text x="1645" y="992">0.02</text>
        <text x="1683" y="992">(m)</text>
        <text x="1345" y="1030">0.005</text>
        <text x="1556" y="1030">0.015</text>
      </g>

      {/* Axis triad */}
      <path d="M2038 971 2027 926" stroke="#118a11" strokeWidth="3" />
      <path d="m2025 910 8 17-12 2z" fill="#0f8f0f" />
      <path d="m2038 971-30 4" stroke="#14147a" strokeWidth="4" />
      <path d="m1993 976 11-7 3 12z" fill="#1010b0" />
      <path d="m2038 972-26 9" stroke="#d01414" strokeWidth="4" />
      <path d="m1999 981 12-5 2 9-9 3z" fill="#e01414" />
      <ellipse cx="1988" cy="950" rx="6" ry="6" fill="#12c4cc" />
      <ellipse cx="1986" cy="948" rx="3" ry="3" fill="#5ff0f2" />
      <g fontFamily="Liberation Sans" fontSize="15" textAnchor="middle">
        <text x="2024" y="905" fill="#2fa32f">Y</text>
        <text x="1986" y="983" fill="#2323c0">Z</text>
        <text x="1993" y="994" fill="#d63030">X</text>
      </g>
    </svg>
  )
}

export default function App() {
  return (
    <div className="flex min-h-screen flex-col bg-[#f0f0f0] font-['Noto_Sans',sans-serif] text-sm text-[#333]">
      <header className="flex h-[29px] items-center bg-[#f3f3f3] pl-[2px]">
        <svg viewBox="0 0 20 20" className="size-5" aria-hidden="true">
          <path d="M0 0h20v20H0z" fill="#0c0a06" />
          <path d="M1 11c4 1 5-3 9-4s8 1 8 4-4 5-8 5-8-2-9-5z" fill="#8a661c" />
          <path d="M7 9c3-3 9-2 10 1s-3 4-6 3" fill="none" stroke="#d9a53a" strokeWidth="1.4" />
          <path d="M3 12c3 2 8 3 12 1" fill="none" stroke="#5e7a30" strokeWidth="1" />
        </svg>
        <h1 className="ml-1 text-[15px] text-[#999]">D2 : CFX - CFX-Pre</h1>
        <div className="ml-auto flex h-full text-[#9a9a9a]">
          <button type="button" aria-label="Minimize" className="flex w-[58px] items-center justify-center">
            <svg viewBox="0 0 14 14" className="size-[14px]"><path d="M1 7h12" stroke="currentColor" /></svg>
          </button>
          <button type="button" aria-label="Restore" className="flex w-[58px] items-center justify-center">
            <svg viewBox="0 0 14 14" className="size-[14px]" fill="none" stroke="currentColor" strokeWidth="1.2">
              <rect x="1" y="4" width="9" height="9" rx="1" />
              <path d="M4 2.500Q4 1 5.500 1h5Q13 1 13 3.500v5q0 1.500-1.500 1.500" />
            </svg>
          </button>
          <button type="button" aria-label="Close" className="flex w-[58px] items-center justify-center">
            <svg viewBox="0 0 14 14" className="size-[14px]"><path d="m1 1 12 12M13 1 1 13" stroke="currentColor" strokeWidth="1.2" /></svg>
          </button>
        </div>
      </header>

      <nav className="flex h-6 items-center gap-5 bg-white pt-[2px] pl-[9px] text-[13px] text-[#a3a3a3]">
        {MENUS.map((m) => (
          <button key={m} type="button">{m}</button>
        ))}
      </nav>

      <div className="flex h-[33px] items-center border-b-2 border-[#dadada] pt-[2px]">
        <span className="flex w-3 justify-center self-stretch"><Dots /></span>
        {MAIN_TOOLS.map((group, i) => (
          <Fragment key={i}>
            <Tools tools={group} />
            <Handle />
          </Fragment>
        ))}
      </div>

      <div className="flex flex-1 pb-[26px]">
        <aside className="flex w-[35%] flex-col pt-[9px] pr-1 pb-[5px] pl-[11px]">
          <h2 className="mb-px flex h-[26px] w-[66px] items-center justify-center bg-[#fafafa] font-['DejaVu_Sans_Condensed','DejaVu_Sans',sans-serif]">
            Outline
          </h2>
          <div className="flex-1 border border-[#a6a6a6] bg-white font-['DejaVu_Sans_Condensed','DejaVu_Sans',sans-serif]">
            <ul className="grid h-[885px] auto-rows-fr">
              {TREE.map((node, i) => <TreeRow key={i} node={node} />)}
            </ul>
          </div>
        </aside>

        <main className="flex flex-1 flex-col pt-2 pr-[5px] pl-[9px]">
          <div className="mb-px flex h-8 items-center">
            <span className="flex w-3 justify-center self-stretch"><Dots /></span>
            <ViewTool icon="pick" label="Select" />
            <Handle />
            <ViewTool icon="rotate" label="Rotate" active />
            <ViewTool icon="pan" label="Pan" />
            <ViewTool icon="zoomFree" label="Zoom" />
            <ViewTool icon="zoomBox" label="Zoom box" />
            <ViewTool icon="zoomFit" label="Fit view" />
            <span className="mx-1 h-6 w-px bg-[#dedede]" />
            <ViewTool icon="highlight" label="Highlighting" active />
            <span className="w-2" />
            <ViewTool icon="square" label="Viewport layout" />
            <button type="button" aria-label="Layout menu" className="flex h-7 w-4 items-center justify-center">
              <svg viewBox="0 0 12 8" className="h-2 w-3"><path d="M0 0h12L6 8z" fill="#222" /></svg>
            </button>
            <Handle />
            <ViewTool icon="helpBox" label="Help" />
          </div>
          <section className="relative">
            <div className="flex h-[26px] items-center gap-3 bg-[#c3c3c3] pt-px pl-[6px] font-['DejaVu_Sans_Condensed','DejaVu_Sans',sans-serif] font-bold text-[#2b2b2b]">
              <span>View 1</span>
              <button type="button" aria-label="View menu">
                <svg viewBox="0 0 12 8" className="h-2 w-3"><path d="M0 0h12L6 8z" fill="#222" /></svg>
              </button>
            </div>
            <FlowModel />
            <div className="absolute top-[42px] right-3 flex flex-col items-end text-white">
              <div className="flex items-end font-['Inter',sans-serif] text-[42px] leading-[62px] font-bold">
                <svg viewBox="0 0 40 36" className="mb-[15px] h-9 w-10" fill="currentColor" aria-label="A">
                  <path d="M0 36 14 1h10L10 36z" />
                  <path d="m26 3 13 33H28l-7-20z" />
                </svg>
                nsys
              </div>
              <div className="-mt-2 font-['Open_Sans',sans-serif] text-[22px] leading-7 font-bold">2023 R2</div>
            </div>
          </section>
          <div className="mt-[6px] flex-1 border border-[#a6a6a6] bg-white" />
        </main>
      </div>
    </div>
  )
}
